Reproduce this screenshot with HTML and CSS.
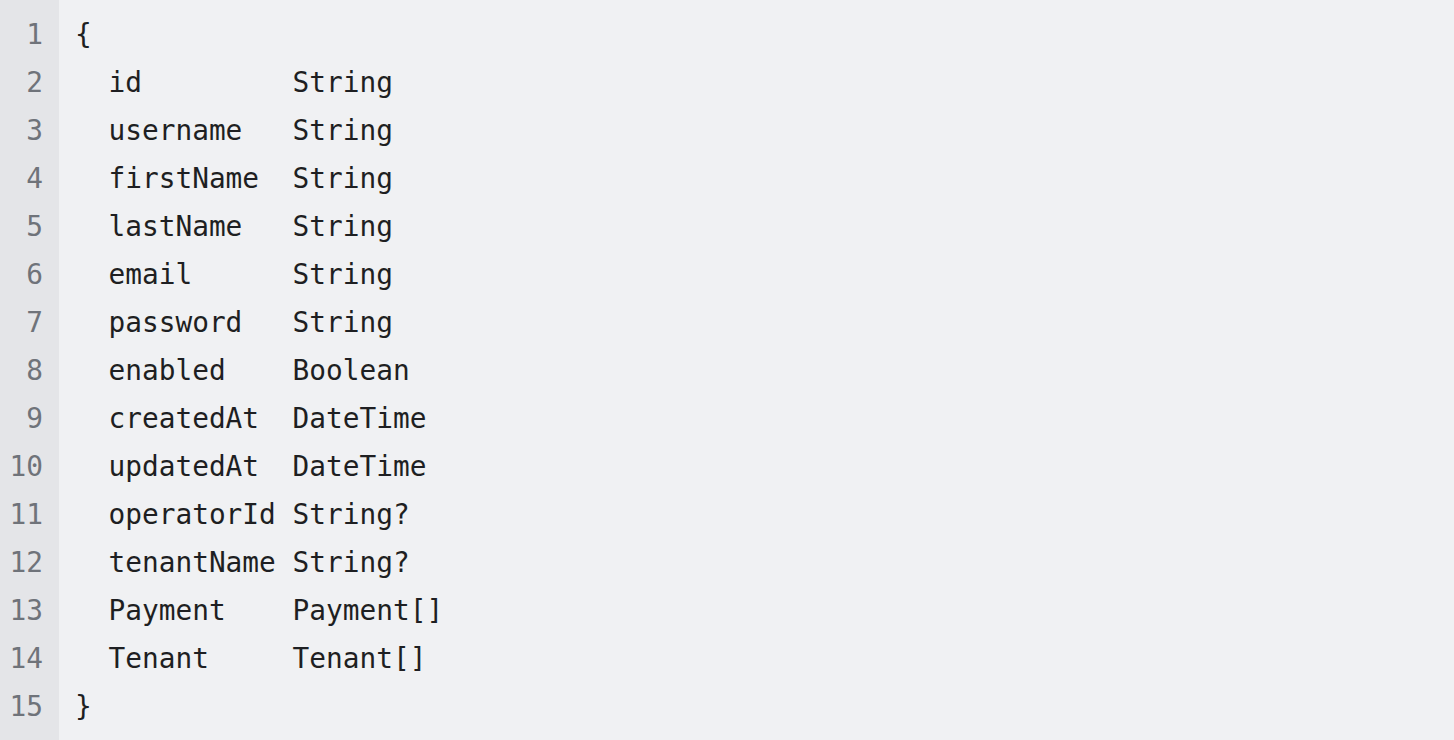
FILE: index.html
```html
<!DOCTYPE html>
<html>
<head>
<meta charset="utf-8">
<link rel="stylesheet" href="styles.css">
</head>
<body>
<div class="editor">
  <div class="gutter">
    <div class="ln">1</div><div class="ln">2</div><div class="ln">3</div><div class="ln">4</div><div class="ln">5</div>
    <div class="ln">6</div><div class="ln">7</div><div class="ln">8</div><div class="ln">9</div><div class="ln">10</div>
    <div class="ln">11</div><div class="ln">12</div><div class="ln">13</div><div class="ln">14</div><div class="ln">15</div>
  </div>
  <pre class="code"><div class="line">{</div><div class="line">  id         String</div><div class="line">  username   String</div><div class="line">  firstName  String</div><div class="line">  lastName   String</div><div class="line">  email      String</div><div class="line">  password   String</div><div class="line">  enabled    Boolean</div><div class="line">  createdAt  DateTime</div><div class="line">  updatedAt  DateTime</div><div class="line">  operatorId String?</div><div class="line">  tenantName String?</div><div class="line">  Payment    Payment[]</div><div class="line">  Tenant     Tenant[]</div><div class="line">}</div></pre>
</div>
</body>
</html>
```
FILE: styles.css
```css
html, body {
  margin: 0;
  padding: 0;
  height: 100%;
  background: #f0f1f3;
}
.editor {
  display: flex;
  height: 740px;
  font-family: "DejaVu Sans Mono", "Liberation Mono", monospace;
  font-size: 27.8px;
}
.gutter {
  width: 59px;
  box-sizing: border-box;
  background: #e4e5e8;
  padding: 11px 16px 0 0;
  text-align: right;
  color: #6f737a;
}
.ln {
  height: 48px;
  line-height: 48px;
}
.code {
  margin: 0;
  padding: 11px 0 0 16px;
  font: inherit;
  color: #1e1f22;
}
.line {
  height: 48px;
  line-height: 48px;
  white-space: pre;
}
```
